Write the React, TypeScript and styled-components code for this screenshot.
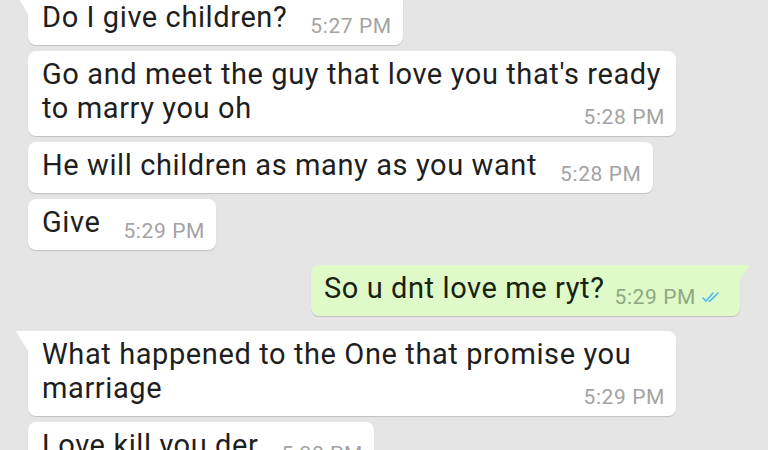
import React from "react";
import styled, { createGlobalStyle, css } from "styled-components";

const GlobalStyle = createGlobalStyle`
  html, body {
    margin: 0;
    padding: 0;
    background: #e5e5e5;
    overflow: hidden;
  }
  body {
    font-family: Roboto, "Noto Sans", Arial, sans-serif;
  }
`;

const Chat = styled.div`
  display: flex;
  flex-direction: column;
  padding: 0 28px;
  margin-top: -6px;
`;

const Bubble = styled.div<{ $out?: boolean; $tail?: boolean; $gap: number }>`
  position: relative;
  display: flow-root;
  align-self: ${(p) => (p.$out ? "flex-end" : "flex-start")};
  max-width: 648px;
  box-sizing: border-box;
  margin-top: ${(p) => p.$gap}px;
  padding: ${(p) => (p.$out ? "6px 18px 7px 13px" : "6px 11px 7px 14px")};
  border-radius: 8px;
  background: ${(p) => (p.$out ? "#dff9c9" : "#ffffff")};
  box-shadow: 0 1px 1px rgba(0, 0, 0, 0.16);
  color: ${(p) => (p.$out ? "#17220f" : "#1e1e1e")};
  ${(p) =>
    p.$tail &&
    !p.$out &&
    css`
      border-top-left-radius: 0;
      &::before {
        content: "";
        position: absolute;
        top: 0;
        left: -12px;
        width: 0;
        height: 0;
        border-top: 20px solid #ffffff;
        border-left: 12px solid transparent;
      }
    `}
  ${(p) =>
    p.$tail &&
    p.$out &&
    css`
      border-top-right-radius: 0;
      &::after {
        content: "";
        position: absolute;
        top: 0;
        right: -10px;
        width: 0;
        height: 0;
        border-top: 15px solid #dff9c9;
        border-right: 10px solid transparent;
      }
    `}
`;

const Text = styled.div`
  font-size: 29px;
  line-height: 34px;
  letter-spacing: 0.6px;
`;

const Meta = styled.span<{ $out?: boolean }>`
  float: right;
  display: inline-flex;
  align-items: center;
  gap: 6px;
  margin: 14px 0 0 ${(p) => (p.$out ? 10 : 23)}px;
  font-size: 21px;
  line-height: 24px;
  letter-spacing: 0.6px;
  color: ${(p) => (p.$out ? "#8ea883" : "#a3a3a3")};
`;

const Ticks = () => (
  <svg width="20" height="14" viewBox="0 0 20 14" fill="none" stroke="#4fb8ef" strokeWidth="1.6" strokeLinecap="round">
    <path d="M1 8 L4 11 L11 3" />
    <path d="M7 11 L8 11 L16 3" />
  </svg>
);

type Msg = { text: string; time: string; out?: boolean; tail?: boolean; gap: number };

const messages: Msg[] = [
  { text: "Do I give children?", time: "5:27 PM", tail: true, gap: 0 },
  { text: "Go and meet the guy that love you that's ready to marry you oh", time: "5:28 PM", gap: 6 },
  { text: "He will children as many as you want", time: "5:28 PM", gap: 6 },
  { text: "Give", time: "5:29 PM", gap: 6 },
  { text: "So u dnt love me ryt?", time: "5:29 PM", out: true, tail: true, gap: 15 },
  { text: "What happened to the One that promise you marriage", time: "5:29 PM", tail: true, gap: 15 },
  { text: "Love kill you der", time: "5:30 PM", gap: 6 },
];

export default function App() {
  return (
    <>
      <GlobalStyle />
      <Chat>
        {messages.map((m, i) => (
          <Bubble key={i} $out={m.out} $tail={m.tail} $gap={m.gap}>
            <Text>
              {m.text}
              <Meta $out={m.out}>
                {m.time}
                {m.out && <Ticks />}
              </Meta>
            </Text>
          </Bubble>
        ))}
      </Chat>
    </>
  );
}
